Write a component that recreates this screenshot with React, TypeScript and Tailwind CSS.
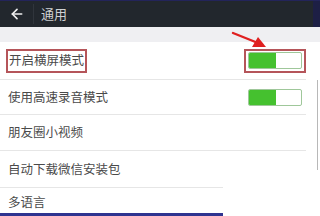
import { ArrowLeft } from "lucide-react";

const font = { fontFamily: '"Noto Sans CJK SC", "Noto Sans", sans-serif' };

function Toggle() {
  return (
    <div className="flex h-[17px] w-[54px] overflow-hidden rounded-[2px] border border-[#9fc79a] bg-white">
      <div className="h-full w-[27px] bg-[#45c12f]" />
    </div>
  );
}

export default function App() {
  return (
    <div className="relative h-[216px] w-[320px] overflow-hidden bg-white" style={font}>
      <div className="flex h-[27px] items-center border-t border-[#23245a] bg-[#22272d]">
        <div className="flex w-[33px] justify-center">
          <ArrowLeft size={16} strokeWidth={2.5} className="text-[#eeeeee]" />
        </div>
        <div className="h-[20px] w-px bg-[#30353c]" />
        <div className="ml-[7px] text-[13px] text-[#cfd1d3]">通用</div>
        <div className="ml-auto h-full w-[7px] bg-[#1d1f45]" />
      </div>
      <div className="h-[15px] bg-[#efeff2]" />

      <div className="mr-[14px] flex h-[38px] items-center justify-between border-b border-[#e6e6e6] pl-[6px]">
        <div className="flex h-[24px] items-center border-2 border-[#b5555a] px-[1px] text-[12.5px] text-[#4a4a4a]">
          开启横屏模式
        </div>
        <div className="flex h-[24px] w-[62px] items-center justify-center border-2 border-[#b5555a]">
          <Toggle />
        </div>
      </div>

      <div className="mr-[14px] flex h-[35px] items-center justify-between border-b border-[#e6e6e6] pl-[8px] pr-[4px]">
        <div className="text-[12.5px] text-[#4a4a4a]">使用高速录音模式</div>
        <Toggle />
      </div>

      <div className="mr-[14px] flex h-[36px] items-center border-b border-[#e6e6e6] pl-[8px]">
        <div className="text-[12.5px] text-[#4a4a4a]">朋友圈小视频</div>
      </div>

      <div className="mr-[97px] flex h-[37px] items-center border-b border-[#e6e6e6] pl-[8px]">
        <div className="text-[12.5px] text-[#4a4a4a]">自动下载微信安装包</div>
      </div>

      <div className="flex h-[25px] items-center pl-[8px] pt-[4px]">
        <div className="text-[12.5px] text-[#4a4a4a]">多语言</div>
      </div>

      <div className="absolute bottom-0 left-0 h-[3px] w-[223px] bg-[#2f3490]" />
      <div className="absolute right-[2px] top-[80px] h-[90px] w-px bg-[#b8b8b8]" />

      <svg className="absolute left-[230px] top-[30px]" width="40" height="20" viewBox="0 0 40 20">
        <line x1="3" y1="3" x2="28" y2="13" stroke="#e02020" strokeWidth="2.4" strokeLinecap="round" />
        <polygon points="36,17 22,17 28,7" fill="#e02020" />
      </svg>
    </div>
  );
}
